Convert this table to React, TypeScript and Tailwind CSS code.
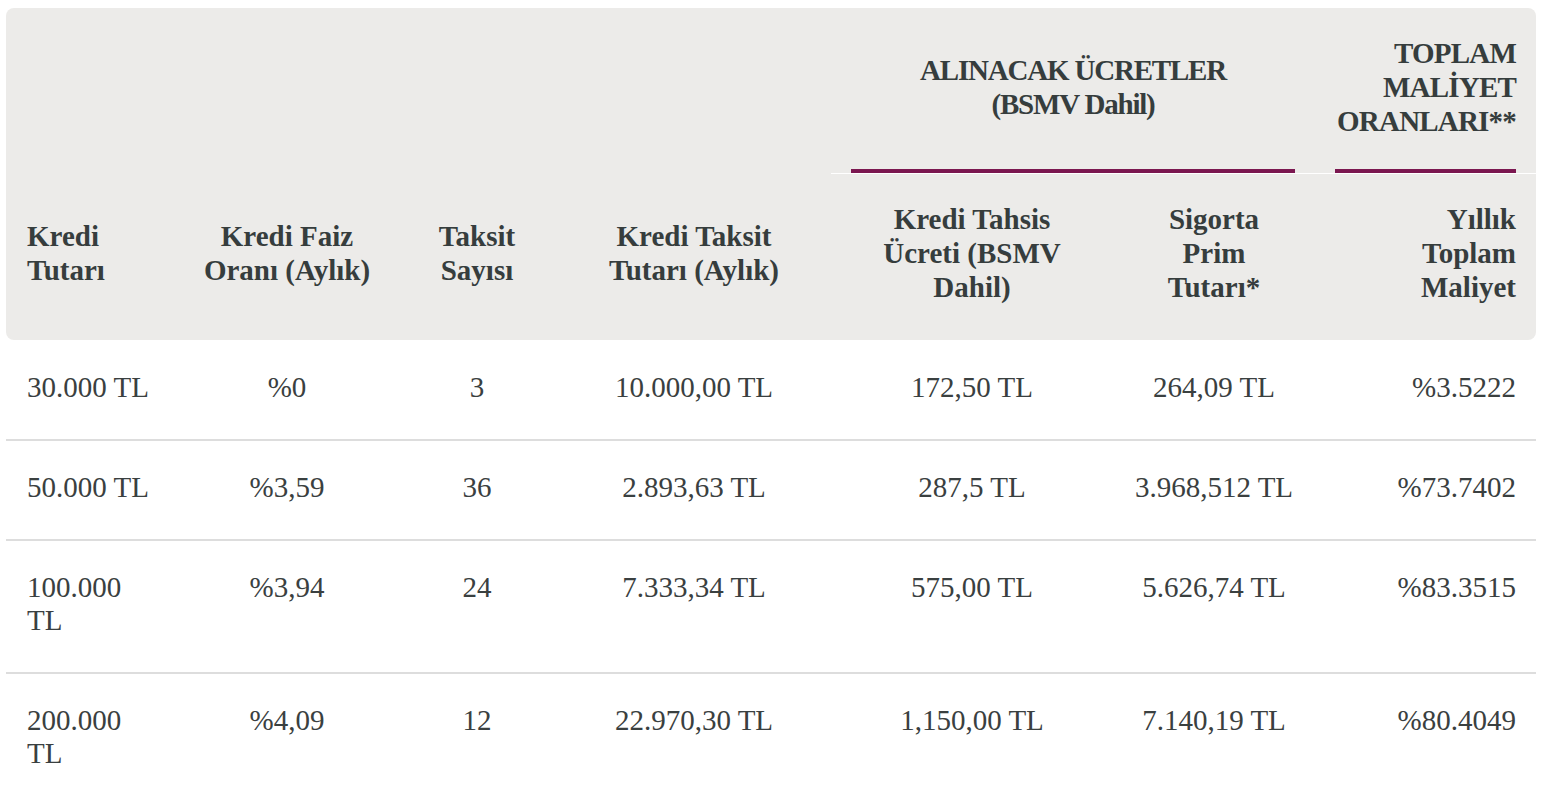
import React from "react";

type Row = {
  amount: React.ReactNode;
  rate: string;
  count: string;
  installment: string;
  fee: string;
  insurance: string;
  cost: string;
};

const rows: Row[] = [
  { amount: "30.000 TL", rate: "%0", count: "3", installment: "10.000,00 TL", fee: "172,50 TL", insurance: "264,09 TL", cost: "%3.5222" },
  { amount: "50.000 TL", rate: "%3,59", count: "36", installment: "2.893,63 TL", fee: "287,5 TL", insurance: "3.968,512 TL", cost: "%73.7402" },
  { amount: <>100.000<br />TL</>, rate: "%3,94", count: "24", installment: "7.333,34 TL", fee: "575,00 TL", insurance: "5.626,74 TL", cost: "%83.3515" },
  { amount: <>200.000<br />TL</>, rate: "%4,09", count: "12", installment: "22.970,30 TL", fee: "1,150,00 TL", insurance: "7.140,19 TL", cost: "%80.4049" },
];

const headBg = "bg-[#ecebe9]";

const App: React.FC = () => {
  return (
    <div className="min-h-screen bg-white pl-[6px] pt-[8px] text-[29px] text-[#363d3d]" style={{ fontFamily: '"Liberation Serif", "Times New Roman", serif' }}>
      <table className="w-[1530px] table-fixed border-separate border-spacing-0">
        <colgroup>
          <col className="w-[171px]" />
          <col className="w-[220px]" />
          <col className="w-[160px]" />
          <col className="w-[274px]" />
          <col className="w-[282px]" />
          <col className="w-[202px]" />
          <col className="w-[221px]" />
        </colgroup>
        <thead className="font-bold leading-[34px]">
          <tr>
            <th colSpan={4} className={`${headBg} rounded-tl-lg`} />
            <th colSpan={2} className={`${headBg} border-b border-white px-5`}>
              <div className="flex h-[165px] items-center justify-center border-b-4 border-[#7b1750] pb-1 text-center tracking-[-1.2px]">
                <span>
                  ALINACAK ÜCRETLER
                  <br />
                  (BSMV Dahil)
                </span>
              </div>
            </th>
            <th className={`${headBg} rounded-tr-lg border-b border-white px-5`}>
              <div className="flex h-[165px] items-center justify-end border-b-4 border-[#7b1750] pb-1 text-right tracking-[-0.8px]">
                <span>
                  TOPLAM
                  <br />
                  MALİYET
                  <br />
                  ORANLARI**
                </span>
              </div>
            </th>
          </tr>
          <tr>
            <th className={`${headBg} rounded-bl-lg pl-[21px] pr-5`}>
              <div className="flex h-[166px] items-center pb-2 text-left">
                <span>Kredi<br />Tutarı</span>
              </div>
            </th>
            <th className={`${headBg} px-5`}>
              <div className="flex h-[166px] items-center justify-center pb-2 text-center whitespace-nowrap">
                <span>Kredi Faiz<br />Oranı (Aylık)</span>
              </div>
            </th>
            <th className={`${headBg} px-5`}>
              <div className="flex h-[166px] items-center justify-center pb-2 text-center">
                <span>Taksit<br />Sayısı</span>
              </div>
            </th>
            <th className={`${headBg} px-5`}>
              <div className="flex h-[166px] items-center justify-center pb-2 text-center whitespace-nowrap">
                <span>Kredi Taksit<br />Tutarı (Aylık)</span>
              </div>
            </th>
            <th className={`${headBg} px-5`}>
              <div className="flex h-[166px] items-center justify-center pb-2 text-center whitespace-nowrap">
                <span>Kredi Tahsis<br />Ücreti (BSMV<br />Dahil)</span>
              </div>
            </th>
            <th className={`${headBg} px-5`}>
              <div className="flex h-[166px] items-center justify-center pb-2 text-center">
                <span>Sigorta<br />Prim<br />Tutarı*</span>
              </div>
            </th>
            <th className={`${headBg} rounded-br-lg px-5`}>
              <div className="flex h-[166px] items-center justify-end pb-2 text-right">
                <span>Yıllık<br />Toplam<br />Maliyet</span>
              </div>
            </th>
          </tr>
        </thead>
        <tbody className="leading-[33px] text-[#3a4040]">
          {rows.map((r, i) => {
            // first row sits one pixel lower under the header
            const cellY = `${i === 0 ? "pt-[31px]" : "pt-[30px]"} pb-[35px] align-top border-b-2 border-[#dddddd]`;
            return (
              <tr key={i}>
                <td className={`${cellY} pl-[21px] pr-5 text-left`}>{r.amount}</td>
                <td className={`${cellY} px-5 text-center`}>{r.rate}</td>
                <td className={`${cellY} px-5 text-center`}>{r.count}</td>
                <td className={`${cellY} px-5 text-center`}>{r.installment}</td>
                <td className={`${cellY} px-5 text-center`}>{r.fee}</td>
                <td className={`${cellY} px-5 text-center whitespace-nowrap`}>{r.insurance}</td>
                <td className={`${cellY} px-5 text-right`}>{r.cost}</td>
              </tr>
            );
          })}
        </tbody>
      </table>
    </div>
  );
};

export default App;
